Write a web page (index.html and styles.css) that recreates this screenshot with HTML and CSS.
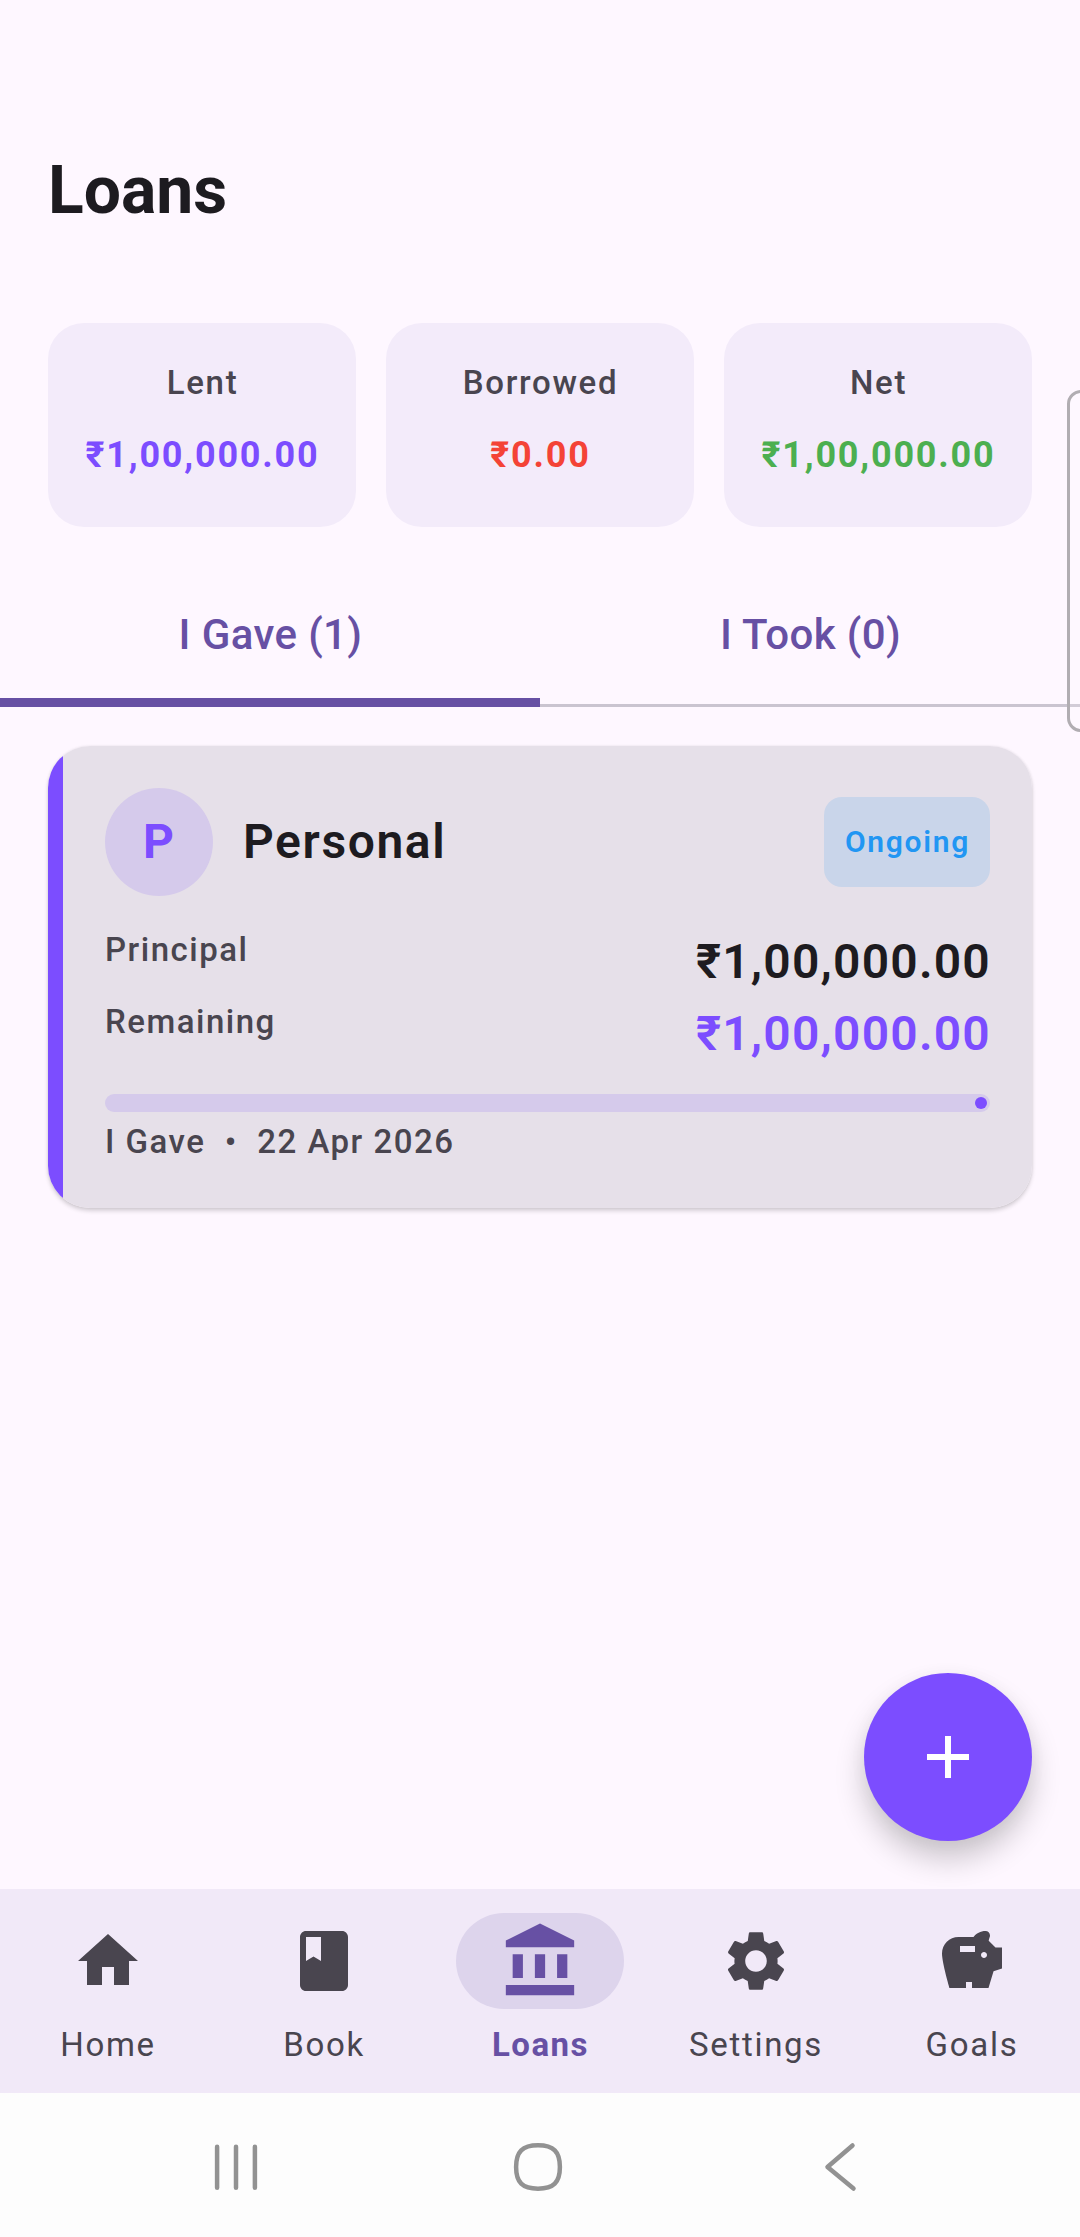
FILE: index.html
```html
<!DOCTYPE html>
<html lang="en">
<head>
<meta charset="utf-8">
<title>Loans</title>
<link rel="stylesheet" href="styles.css">
</head>
<body>
<div class="app">
  <header class="header"><h1 class="title">Loans</h1></header>

  <section class="summary">
    <div class="stat"><span class="label">Lent</span><span class="stat-value lent">₹1,00,000.00</span></div>
    <div class="stat"><span class="label">Borrowed</span><span class="stat-value borrowed">₹0.00</span></div>
    <div class="stat"><span class="label">Net</span><span class="stat-value net">₹1,00,000.00</span></div>
  </section>

  <div class="tabs">
    <div class="tab active">I Gave (1)</div>
    <div class="tab">I Took (0)</div>
  </div>

  <main class="list">
    <article class="loan">
      <div class="loan-head">
        <div class="avatar">P</div>
        <h2 class="loan-name">Personal</h2>
        <span class="badge">Ongoing</span>
      </div>
      <div class="loan-row"><span class="label">Principal</span><span class="amount">₹1,00,000.00</span></div>
      <div class="loan-row"><span class="label">Remaining</span><span class="amount accent">₹1,00,000.00</span></div>
      <div class="progress"><span class="progress-stop"></span></div>
      <div class="label meta">I Gave&nbsp; •&nbsp; 22 Apr 2026</div>
    </article>
    <button class="fab" aria-label="Add loan">
      <svg viewBox="0 0 24 24" width="72" height="72"><path d="M19 13h-6v6h-2v-6H5v-2h6V5h2v6h6v2z"/></svg>
    </button>
  </main>

  <nav class="nav">
    <a class="nav-item"><span class="pill"><svg viewBox="0 0 24 24"><path d="M10 20v-6h4v6h5v-8h3L12 3 2 12h3v8z"/></svg></span><span class="nav-label">Home</span></a>
    <a class="nav-item"><span class="pill"><svg viewBox="0 0 24 24"><path d="M18 2H6c-1.1 0-2 .9-2 2v16c0 1.1.9 2 2 2h12c1.1 0 2-.9 2-2V4c0-1.1-.9-2-2-2zM6 4h5v8l-2.500-1.500L6 12V4z"/></svg></span><span class="nav-label">Book</span></a>
    <a class="nav-item selected"><span class="pill"><svg viewBox="0 0 24 24"><path d="M4 10h3v7H4zM10.500 10h3v7h-3zM2 19h20v3H2zM17 10h3v7h-3zM12 1L2 6v2h20V6z"/></svg></span><span class="nav-label">Loans</span></a>
    <a class="nav-item"><span class="pill"><svg viewBox="0 0 24 24"><path d="M19.140 12.940c.04-.3.06-.61.06-.94 0-.32-.02-.64-.07-.94l2.030-1.580c.18-.14.23-.41.12-.61l-1.920-3.320c-.12-.22-.37-.29-.59-.22l-2.390.96c-.5-.38-1.030-.7-1.620-.94L14.400 2.810c-.04-.24-.24-.41-.48-.41h-3.840c-.24 0-.43.17-.47.41L9.250 5.350c-.59.24-1.130.57-1.620.94l-2.390-.96c-.22-.08-.47 0-.59.22L2.740 8.870c-.12.21-.08.47.12.61l2.030 1.580c-.05.3-.09.63-.09.94s.02.64.07.94l-2.030 1.580c-.18.14-.23.41-.12.61l1.920 3.320c.12.22.37.29.59.22l2.390-.96c.5.38 1.030.7 1.620.94l.36 2.540c.05.24.24.41.48.41h3.840c.24 0 .44-.17.47-.41l.36-2.540c.59-.24 1.130-.56 1.620-.94l2.390.96c.22.08.47 0 .59-.22l1.920-3.320c.12-.22.07-.47-.12-.61l-2.010-1.580zM12 15.600c-1.980 0-3.600-1.620-3.600-3.600s1.620-3.600 3.600-3.600 3.600 1.620 3.600 3.600-1.620 3.600-3.600 3.600z"/></svg></span><span class="nav-label">Settings</span></a>
    <a class="nav-item"><span class="pill"><svg viewBox="0 0 24 24"><path d="M19.830 7.500l-2.270-2.270c.07-.42.18-.81.32-1.150.08-.18.12-.37.12-.58 0-.83-.67-1.500-1.500-1.500-1.640 0-3.090.79-4 2h-5C4.460 4 2 6.460 2 9.500S4.500 21 4.500 21H10v-2h2v2h5.500l1.680-5.590 2.820-.94V7.500h-2.170zM13 9H8V7h5v2zm3 2c-.55 0-1-.45-1-1s.45-1 1-1 1 .45 1 1-.45 1-1 1z"/></svg></span><span class="nav-label">Goals</span></a>
  </nav>

  <div class="system">
    <svg viewBox="0 0 54 54" width="54" height="54"><path d="M8.100 6.800v41M27 6.800v41M45.900 6.800v41"/></svg>
    <svg viewBox="0 0 54 54" width="54" height="54"><path d="M27 5.300C42.500 5.300 48.900 11.500 48.900 27S42.500 48.700 27 48.700 5.100 42.500 5.100 27 11.500 5.300 27 5.300z"/></svg>
    <svg viewBox="0 0 54 54" width="54" height="54"><path d="M39.500 5.500L14.500 27l26 21.500"/></svg>
  </div>
  <div class="edge-handle"></div>
</div>
</body>
</html>
```
FILE: styles.css
```css
* { box-sizing: border-box; }

body {
  margin: 0;
  background: #fef7ff;
  font-family: Roboto, "Noto Sans", sans-serif;
  color: #1d1b20;
}

.app {
  position: relative;
  width: 1080px;
  height: 2237px;
  display: flex;
  flex-direction: column;
  overflow: hidden;
}

.header {
  height: 323px;
  padding: 150px 48px 0;
}

.title {
  margin: 0;
  font-size: 66px;
  line-height: 81px;
  font-weight: 700;
}

.summary {
  display: grid;
  grid-template-columns: repeat(3, 1fr);
  gap: 30px;
  padding: 0 48px;
  margin-bottom: 36px;
}

.stat {
  height: 204px;
  padding-top: 36px;
  display: flex;
  flex-direction: column;
  align-items: center;
  gap: 24px;
  border-radius: 36px;
  background: #f3ebfa;
}

.label {
  font-size: 33px;
  line-height: 48px;
  font-weight: 500;
  letter-spacing: 1.5px;
  color: #49454f;
}

.stat .label {
  padding-left: 1px;
  letter-spacing: 1.7px;
}

.stat-value {
  font-size: 36px;
  line-height: 48px;
  font-weight: 700;
  letter-spacing: 1.8px;
  padding-left: 1px;
}

.lent, .accent { color: #7c4dff; }
.borrowed { color: #f44336; }
.net { color: #4caf50; }

.tabs {
  display: flex;
  height: 144px;
  flex: none;
  box-shadow: inset 0 -3px #cac4d0;
}

.tab {
  flex: 1;
  text-align: center;
  font-size: 42px;
  line-height: 144px;
  font-weight: 500;
  letter-spacing: 0.4px;
  padding-left: 1px;
  color: #6750a4;
}

.tab.active { box-shadow: inset 0 -9px #6750a4; }

.list {
  flex: 1;
  display: flex;
  flex-direction: column;
  justify-content: space-between;
  padding: 39px 48px 48px;
}

.loan {
  height: 462px;
  padding: 42px 42px 0 57px;
  border-radius: 42px;
  background: linear-gradient(90deg, #7c4dff 15px, #e6e0e9 15px);
  box-shadow: 0 3px 4px rgba(0, 0, 0, 0.16), 0 0 3px rgba(0, 0, 0, 0.08);
}

.loan-head {
  display: flex;
  align-items: center;
  gap: 30px;
  margin-bottom: 30px;
}

.avatar {
  width: 108px;
  height: 108px;
  border-radius: 50%;
  background: #d5caeb;
  color: #7c4dff;
  font-size: 48px;
  line-height: 108px;
  font-weight: 700;
  letter-spacing: 1px;
  text-align: center;
}

.loan-name {
  flex: 1;
  margin: 0;
  font-size: 48px;
  line-height: 72px;
  font-weight: 600;
  letter-spacing: 1.6px;
}

.badge {
  padding: 0 20px 0 21px;
  border-radius: 18px;
  background: #c9d5ea;
  color: #2196f3;
  font-size: 30px;
  line-height: 90px;
  font-weight: 600;
  letter-spacing: 1.7px;
}

.loan-row {
  display: flex;
  justify-content: space-between;
  align-items: flex-start;
}

.amount {
  font-size: 48px;
  line-height: 72px;
  font-weight: 600;
  letter-spacing: 1.2px;
  margin-right: -1px;
}

.progress {
  display: flex;
  justify-content: flex-end;
  height: 18px;
  margin: 24px 0 6px;
  padding: 3px;
  border-radius: 9px;
  background: #d5caeb;
}

.progress-stop {
  width: 12px;
  height: 12px;
  border-radius: 50%;
  background: #7c4dff;
}

.fab {
  align-self: flex-end;
  width: 168px;
  height: 168px;
  padding: 0;
  border: 0;
  border-radius: 50%;
  display: grid;
  place-items: center;
  background: #7c4dff;
  fill: #fff;
  box-shadow: 0 18px 30px rgba(0, 0, 0, 0.2), 0 3px 18px rgba(0, 0, 0, 0.04);
}

.nav {
  position: relative;
  display: grid;
  grid-template-columns: repeat(5, 1fr);
  height: 204px;
  flex: none;
  background: #f1e9f8;
}

.nav-item {
  display: flex;
  flex-direction: column;
  align-items: center;
  padding-top: 24px;
  gap: 12px;
  color: #49454f;
}

.pill {
  width: 168px;
  height: 96px;
  border-radius: 48px;
  display: grid;
  place-items: center;
}

.pill svg {
  width: 72px;
  height: 72px;
  fill: currentColor;
}

.nav-label {
  font-size: 33px;
  line-height: 48px;
  letter-spacing: 1.7px;
}

.selected { color: #6750a4; }
.selected .pill { background: #ddd4ec; }
.selected .pill svg { width: 82px; height: 82px; }
.selected .nav-label { font-weight: 700; padding-left: 1px; letter-spacing: 1.5px; }

.system {
  height: 144px;
  flex: none;
  display: flex;
  justify-content: space-between;
  align-items: center;
  padding: 3px 213px 0 209px;
  background: #fdfdfd;
}

.system svg {
  fill: none;
  stroke: #929292;
  stroke-width: 4.500px;
  stroke-linecap: round;
  stroke-linejoin: round;
}

.edge-handle {
  position: absolute;
  top: 390px;
  right: -20px;
  width: 33px;
  height: 342px;
  border: 3px solid #b1adb2;
  border-radius: 14px;
  background: rgba(255, 255, 255, 0.15);
}
```
